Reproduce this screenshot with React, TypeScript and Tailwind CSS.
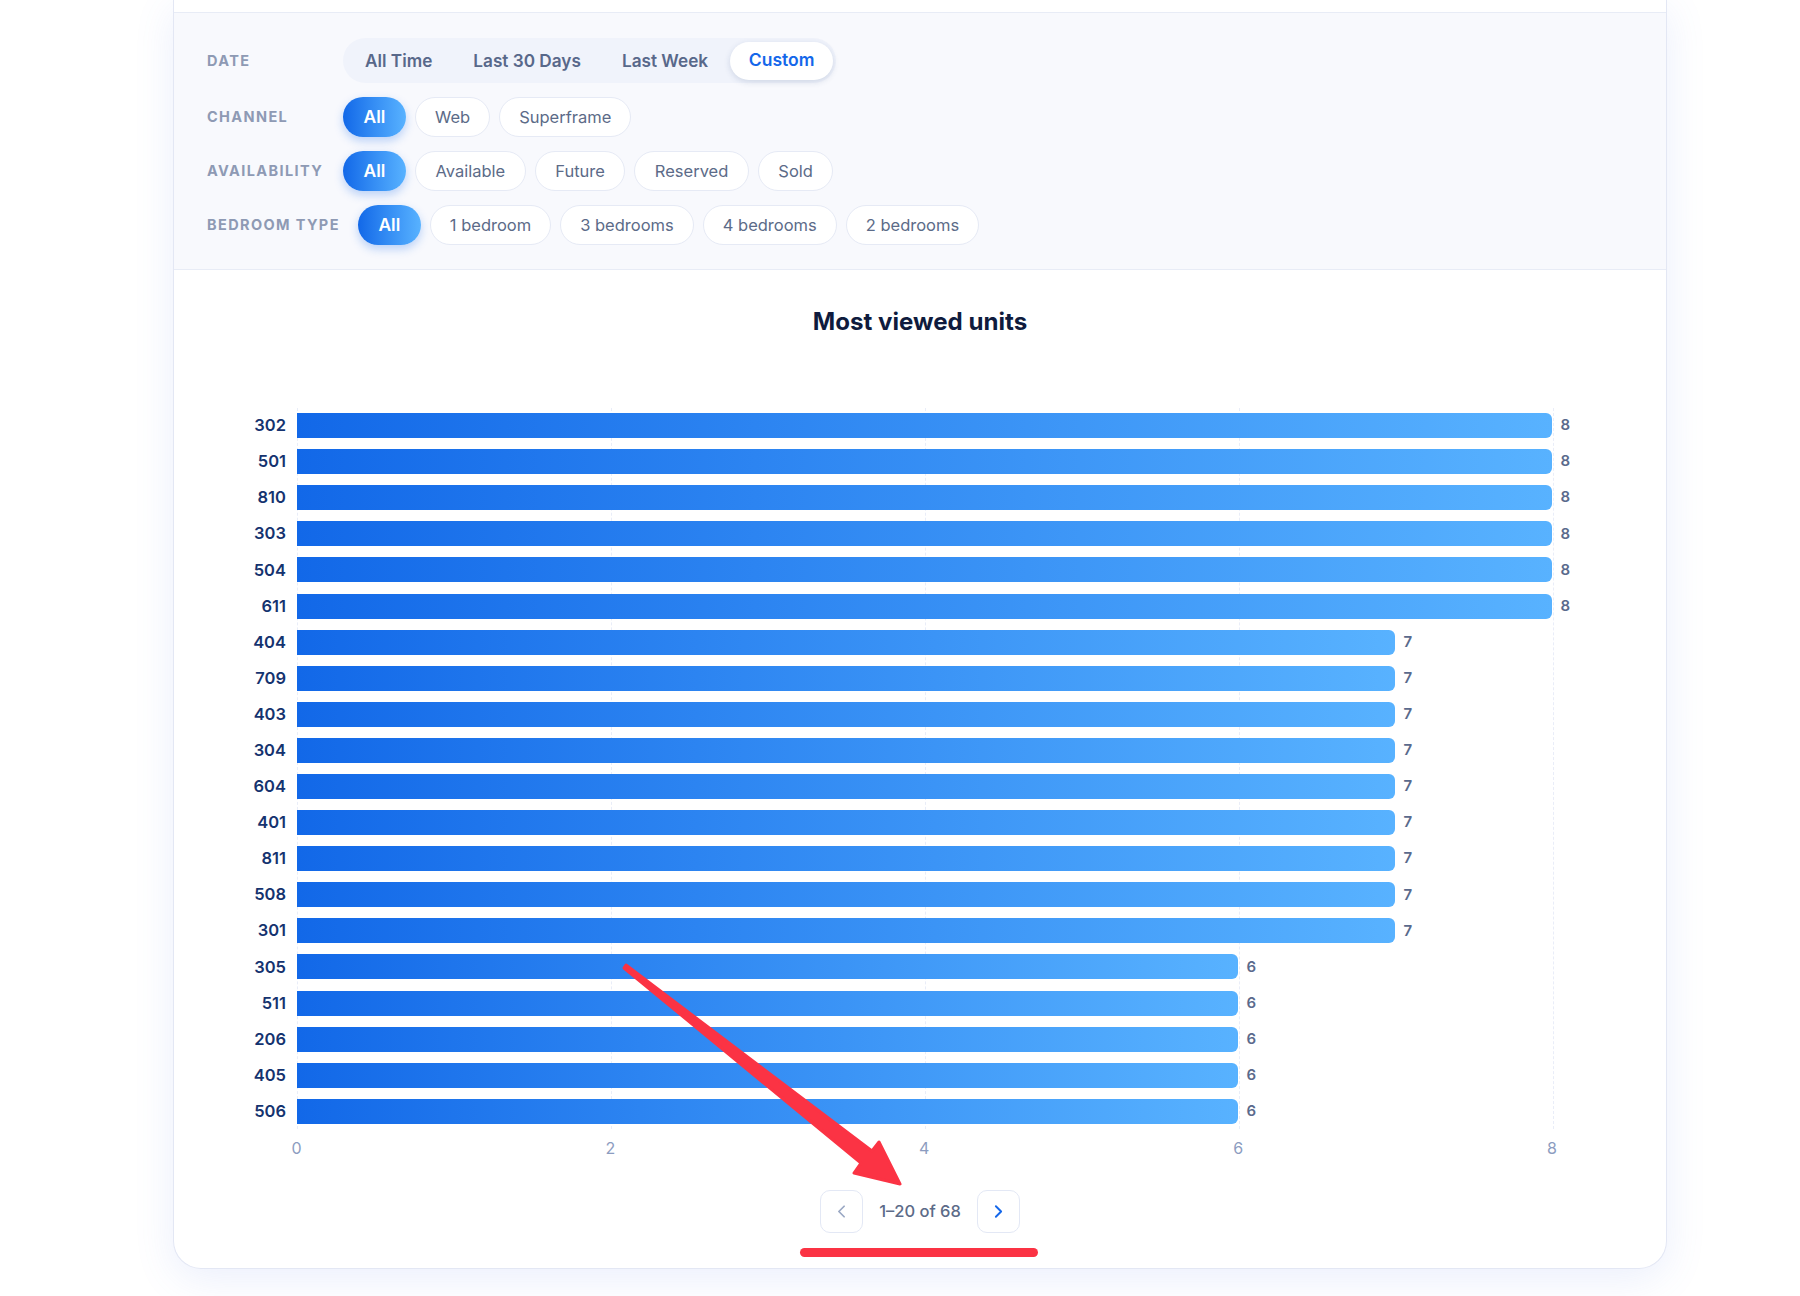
import { ChevronLeft, ChevronRight } from "lucide-react";

const units: [string, number][] = [
  ["302", 8], ["501", 8], ["810", 8], ["303", 8], ["504", 8], ["611", 8],
  ["404", 7], ["709", 7], ["403", 7], ["304", 7], ["604", 7], ["401", 7], ["811", 7], ["508", 7], ["301", 7],
  ["305", 6], ["511", 6], ["206", 6], ["405", 6], ["506", 6],
];

const PX_PER_VIEW = 157;

const FilterLabel = ({ children }: { children: string }) => (
  <span className="min-w-[118px] text-[14.5px] font-bold uppercase tracking-[0.095em] text-[#8e9ab4]">
    {children}
  </span>
);

const ActivePill = () => (
  <button className="h-10 w-[63px] rounded-full bg-gradient-to-r from-[#1268e8] to-[#58b2ff] text-[17.5px] font-semibold text-white shadow-[0_4px_10px_rgba(20,104,234,0.28)]">
    All
  </button>
);

const Pill = ({ label, wide }: { label: string; wide?: boolean }) => (
  <button
    className={`h-10 rounded-full border-[1.5px] border-[#e6eaf5] bg-white text-[16.5px] font-normal text-[#5c6b88] ${
      wide ? "px-[19.5px]" : "px-[19px]"
    }`}
  >
    {label}
  </button>
);

const FilterRow = ({ label, options, wide }: { label: string; options: string[]; wide?: boolean }) => (
  <div className="flex items-center gap-[18px]">
    <FilterLabel>{label}</FilterLabel>
    <div className="flex items-center gap-[9px]">
      <ActivePill />
      {options.map((o) => (
        <Pill key={o} label={o} wide={wide} />
      ))}
    </div>
  </div>
);

const Filters = () => (
  <div className="flex flex-col gap-[14px] border-b-[1.5px] border-[#e8ecf6] bg-[#f8f9fd] pb-[24px] pl-[33px] pt-[25px]">
    <div className="flex items-center gap-[18px]">
      <FilterLabel>Date</FilterLabel>
      <div className="flex h-[45px] items-center rounded-full bg-[#f0f3fb] pl-[22px] pr-[3px]">
        <span className="text-[17.2px] font-semibold text-[#58688a]">All Time</span>
        <span className="ml-[41px] text-[17.2px] font-semibold text-[#58688a]">Last 30 Days</span>
        <span className="ml-[41px] text-[17.2px] font-semibold text-[#58688a]">Last Week</span>
        <button className="ml-[22px] h-[38px] w-[103px] rounded-full bg-white text-[17.5px] font-semibold text-[#1467ea] shadow-[0_2px_6px_rgba(30,60,120,0.16)]">
          Custom
        </button>
      </div>
    </div>
    <FilterRow label="Channel" options={["Web", "Superframe"]} />
    <FilterRow label="Availability" options={["Available", "Future", "Reserved", "Sold"]} wide />
    <FilterRow label="Bedroom type" options={["1 bedroom", "3 bedrooms", "4 bedrooms", "2 bedrooms"]} />
  </div>
);

const Chart = () => (
  <div className="pr-[112px]">
    <div className="relative">
      {/* grid lines sit behind the bars */}
      <div className="absolute inset-y-0 left-[122.5px] right-0 flex justify-between">
        {[0, 2, 4, 6, 8].map((t) => (
          <div key={t} className="w-0 border-l-[1.5px] border-dashed border-[#e9edf8]" />
        ))}
      </div>
      <div className="relative">
        {units.map(([unit, views]) => (
          <div key={unit} className="flex h-[36.1px] items-center gap-[10.5px]">
            <span className="w-[112px] shrink-0 text-right text-[16.5px] font-semibold text-[#15336f]">{unit}</span>
            <div className="flex min-w-0 flex-1 items-center">
              <div
                className="h-[25px] shrink-0 rounded-r-[6px] bg-gradient-to-r from-[#1268e8] to-[#58b2ff]"
                style={{ width: views * PX_PER_VIEW - 1 }}
              />
              <span className="ml-[9px] shrink-0 text-[15px] font-semibold text-[#5a6a8c]">{views}</span>
            </div>
          </div>
        ))}
      </div>
    </div>
    <div className="ml-[122.5px] mr-[2px] mt-[6.5px] flex h-6 items-center justify-between text-[16px] text-[#8c9cc0]">
      {[0, 2, 4, 6, 8].map((t) => (
        <div key={t} className="flex w-0 justify-center">
          {t}
        </div>
      ))}
    </div>
  </div>
);

const Pagination = () => (
  <div className="mt-[30px] flex items-center justify-center gap-[16px] pb-[35.5px]">
    <button className="flex h-[43px] w-[43px] items-center justify-center rounded-[10px] border-[1.5px] border-[#e3e8f5] bg-white text-[#9aa8c4]">
      <ChevronLeft size={21} strokeWidth={2} />
    </button>
    <span className="text-[16.5px] font-medium text-[#5c6b88]">1–20 of 68</span>
    <button className="flex h-[43px] w-[43px] items-center justify-center rounded-[10px] border-[1.5px] border-[#e3e8f5] bg-white text-[#1467ea]">
      <ChevronRight size={21} strokeWidth={2.2} />
    </button>
  </div>
);

// red annotation drawn on top of the screenshot
const Annotation = () => (
  <svg className="pointer-events-none absolute left-0 top-0" width="1800" height="1296" viewBox="0 0 1800 1296">
    <polygon
      points="626,965 872,1151 879,1142 900,1184 854,1173 861,1163 624,968"
      fill="#fb3344"
      stroke="#fb3344"
      strokeWidth="3"
      strokeLinejoin="round"
    />
    <rect x="800" y="1248" width="238" height="9" rx="4.5" fill="#fb3344" />
  </svg>
);

export default function App() {
  return (
    <div className="relative h-[1296px] w-[1800px] overflow-hidden bg-white font-['Inter',sans-serif]">
      <div className="ml-[173px] w-[1494px] overflow-hidden rounded-b-[28px] border-x-[1.5px] border-b-[1.5px] border-[#e3e7f4] bg-white shadow-[0_10px_40px_rgba(90,120,230,0.12)]">
        <div className="h-[13px] border-b-[1.5px] border-[#e8ecf6]" />
        <Filters />
        <h2 className="pb-[70.5px] pt-[37px] text-center text-[24.1px] font-bold leading-[30px] text-[#0f1b3d]">
          Most viewed units
        </h2>
        <Chart />
        <Pagination />
      </div>
      <Annotation />
    </div>
  );
}
